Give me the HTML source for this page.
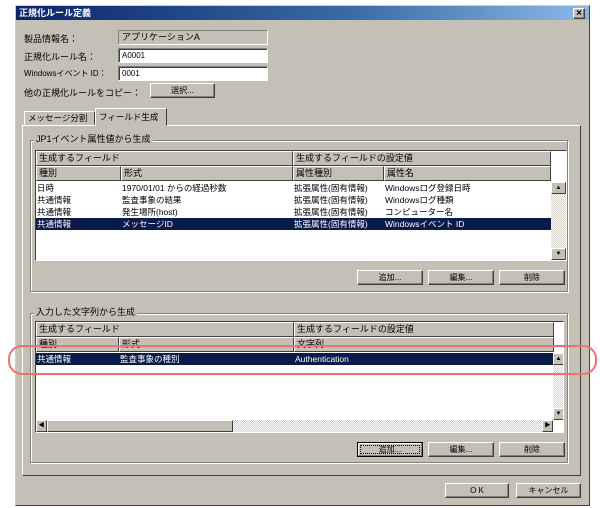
<!DOCTYPE html>
<html><head><meta charset="utf-8"><style>
*{box-sizing:border-box;margin:0;padding:0}
body{width:600px;height:508px;background:#fff;position:relative;overflow:hidden;font-family:"Liberation Sans","Noto Sans CJK JP",sans-serif;font-size:9px;color:#000;white-space:nowrap}
.a{position:absolute}
.win{left:15px;top:5px;width:575px;height:501px;border:1px solid;border-color:#d4d0c8 #404040 #404040 #d4d0c8;background:#c4c0b6}
.title{left:16px;top:6px;width:573px;height:14px;background:linear-gradient(90deg,#0a246a,#3a6ea5 60%,#8cb8e8);color:#fff;font-weight:bold;font-size:9px;line-height:14px;padding-left:3px}
.btn{background:#c4c0b6;border:1px solid;border-color:#fff #404040 #404040 #fff;box-shadow:inset -1px -1px 0 #808080;text-align:center;line-height:13px;font-size:8px}
.field{background:#fff;border:1px solid;border-color:#808080 #fff #fff #808080;box-shadow:inset 1px 1px 0 #404040;line-height:13px;padding-left:3px;font-size:8px}
.grp{border:1px solid #808080;box-shadow:1px 1px 0 #fff, inset 1px 1px 0 #fff}
.gl{background:#c4c0b6;padding:0 2px;font-size:9px;line-height:11px}
.tbl{background:#fff;border:1px solid;border-color:#404040 #fff #fff #404040;overflow:hidden}
.hd{background:#c4c0b6;border:1px solid;border-color:#fff #404040 #404040 #fff;height:15px;line-height:13px;padding-left:2px;font-size:9px}
.row{height:12px;line-height:12px;font-size:8.5px;white-space:nowrap}
.sel{background:#0a1a4a;color:#fff}
.sb{background:repeating-conic-gradient(#d4d0c8 0 25%,#fff 0 50%) 0 0/2px 2px}
.arr{background:#c4c0b6;border:1px solid;border-color:#fff #404040 #404040 #fff;font-size:6px;text-align:center;line-height:10px}
</style></head><body>
<div class="a win"></div>
<div class="a title">正規化ルール定義</div>
<div class="a btn" style="left:573px;top:8px;width:12px;height:11px;line-height:9px;font-weight:bold;font-size:10px">×</div>

<div class="a" style="left:24px;top:32px">製品情報名：</div>
<div class="a" style="left:118px;top:30px;width:150px;height:15px;border:1px solid;border-color:#808080 #fff #fff #808080;padding-left:3px;line-height:13px">アプリケーションA</div>
<div class="a" style="left:24px;top:50px">正規化ルール名：</div>
<div class="a field" style="left:118px;top:48px;width:150px;height:15px">A0001</div>
<div class="a" style="left:24px;top:68px;font-size:8px">Windowsイベント ID：</div>
<div class="a field" style="left:118px;top:66px;width:150px;height:15px">0001</div>
<div class="a" style="left:24px;top:86px">他の正規化ルールをコピー：</div>
<div class="a btn" style="left:150px;top:83px;width:65px;height:15px">選択...</div>

<div class="a" style="left:22px;top:125px;width:559px;height:351px;border:1px solid;border-color:#fff #404040 #404040 #fff"></div>
<div class="a" style="left:24px;top:111px;width:71px;height:14px;border:1px solid;border-color:#fff #404040 transparent #fff;line-height:12px;padding-left:3px;font-size:8.5px">メッセージ分割</div>
<div class="a" style="left:95px;top:108px;width:72px;height:18px;border:1px solid;border-color:#fff #404040 #c4c0b6 #fff;background:#c4c0b6;line-height:16px;padding-left:3px;font-size:8.5px">フィールド生成</div>

<div class="a grp" style="left:30px;top:140px;width:538px;height:152px"></div>
<div class="a gl" style="left:34px;top:134px">JP1イベント属性値から生成</div>
<div class="a tbl" style="left:35px;top:150px;width:532px;height:111px">
 <div class="a hd" style="left:0;top:0;width:257px">生成するフィールド</div>
 <div class="a hd" style="left:257px;top:0;width:258px">生成するフィールドの設定値</div>
 <div class="a hd" style="left:0;top:15px;width:85px">種別</div>
 <div class="a hd" style="left:85px;top:15px;width:172px">形式</div>
 <div class="a hd" style="left:257px;top:15px;width:91px">属性種別</div>
 <div class="a hd" style="left:348px;top:15px;width:167px">属性名</div>
 <div class="a" style="left:0;top:31px;width:515px">
  <div class="row" style="position:relative"><span class="a" style="left:1px">日時</span><span class="a" style="left:86px">1970/01/01 からの経過秒数</span><span class="a" style="left:258px">拡張属性(固有情報)</span><span class="a" style="left:349px">Windowsログ登録日時</span></div>
  <div class="row" style="position:relative"><span class="a" style="left:1px">共通情報</span><span class="a" style="left:86px">監査事象の結果</span><span class="a" style="left:258px">拡張属性(固有情報)</span><span class="a" style="left:349px">Windowsログ種類</span></div>
  <div class="row" style="position:relative"><span class="a" style="left:1px">共通情報</span><span class="a" style="left:86px">発生場所(host)</span><span class="a" style="left:258px">拡張属性(固有情報)</span><span class="a" style="left:349px">コンピューター名</span></div>
  <div class="row sel" style="position:relative"><span class="a" style="left:1px">共通情報</span><span class="a" style="left:86px">メッセージID</span><span class="a" style="left:258px">拡張属性(固有情報)</span><span class="a" style="left:349px">Windowsイベント ID</span></div>
 </div>
 <div class="a sb" style="left:515px;top:31px;width:15px;height:78px"></div>
 <div class="a arr" style="left:515px;top:31px;width:15px;height:12px">▲</div>
 <div class="a arr" style="left:515px;top:97px;width:15px;height:12px">▼</div>
</div>
<div class="a btn" style="left:357px;top:270px;width:66px;height:15px">追加...</div>
<div class="a btn" style="left:428px;top:270px;width:66px;height:15px">編集...</div>
<div class="a btn" style="left:499px;top:270px;width:66px;height:15px">削除</div>

<div class="a grp" style="left:30px;top:313px;width:538px;height:150px"></div>
<div class="a gl" style="left:34px;top:307px">入力した文字列から生成</div>
<div class="a tbl" style="left:35px;top:321px;width:529px;height:112px">
 <div class="a hd" style="left:0;top:0;width:258px">生成するフィールド</div>
 <div class="a hd" style="left:258px;top:0;width:260px">生成するフィールドの設定値</div>
 <div class="a hd" style="left:0;top:15px;width:83px">種別</div>
 <div class="a hd" style="left:83px;top:15px;width:175px">形式</div>
 <div class="a hd" style="left:258px;top:15px;width:260px">文字列</div>
 <div class="a row sel" style="left:0;top:31px;width:517px"><span class="a" style="left:1px">共通情報</span><span class="a" style="left:84px">監査事象の種別</span><span class="a" style="left:259px">Authentication</span></div>
 <div class="a sb" style="left:517px;top:31px;width:11px;height:67px"></div>
 <div class="a arr" style="left:517px;top:31px;width:11px;height:12px">▲</div>
 <div class="a arr" style="left:517px;top:86px;width:11px;height:12px">▼</div>
 <div class="a sb" style="left:0;top:98px;width:517px;height:12px"></div>
 <div class="a arr" style="left:0;top:98px;width:11px;height:12px">◀</div>
 <div class="a" style="left:11px;top:98px;width:186px;height:12px;background:#c4c0b6;border:1px solid;border-color:#fff #404040 #404040 #fff"></div>
 <div class="a arr" style="left:506px;top:98px;width:11px;height:12px">▶</div>
</div>
<div class="a btn" style="left:357px;top:442px;width:66px;height:15px;border-color:#000;box-shadow:inset -1px -1px 0 #808080, inset 1px 1px 0 #fff;outline:1px dotted #000;outline-offset:-4px">追加...</div>
<div class="a btn" style="left:428px;top:442px;width:66px;height:15px">編集...</div>
<div class="a btn" style="left:499px;top:442px;width:66px;height:15px">削除</div>

<div class="a btn" style="left:445px;top:483px;width:64px;height:15px">O K</div>
<div class="a btn" style="left:516px;top:483px;width:65px;height:15px">キャンセル</div>

<div class="a" style="left:8px;top:345px;width:589px;height:30px;border:2px solid #f07070;border-radius:14px"></div>
</body></html>
